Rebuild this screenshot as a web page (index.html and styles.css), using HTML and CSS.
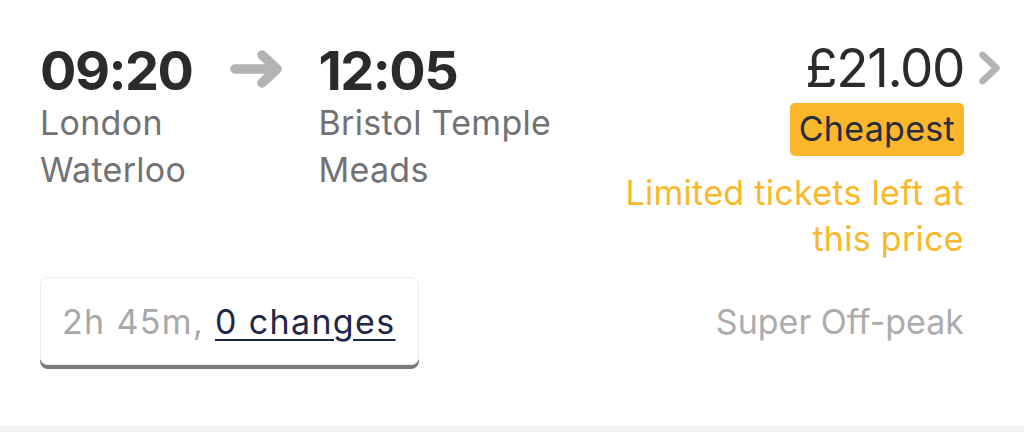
FILE: index.html
```html
<!DOCTYPE html>
<html>
<head>
<meta charset="utf-8">
<link rel="stylesheet" href="styles.css">
</head>
<body>
<div class="card">
  <div class="top">
    <div class="journey">
      <div class="stop">
        <div class="time">09:20</div>
        <div class="station">London<br>Waterloo</div>
      </div>
      <svg class="arrow" width="54" height="40" viewBox="0 0 54 40">
        <path d="M6 20 H48 M33 6 L48 20 L33 34" fill="none" stroke="#b3b3b5" stroke-width="9.5" stroke-linecap="round" stroke-linejoin="round"/>
      </svg>
      <div class="stop">
        <div class="time">12:05</div>
        <div class="station">Bristol Temple<br>Meads</div>
      </div>
    </div>
    <div class="fare">
      <div class="price-row">
        <span class="price">£21.00</span>
        <svg class="chev" width="24" height="34" viewBox="0 0 24 34">
          <path d="M4.5 4 L18.5 17 L4.5 30" fill="none" stroke="#b3b3b5" stroke-width="6.5" stroke-linecap="round" stroke-linejoin="round"/>
        </svg>
      </div>
      <div class="badge">Cheapest</div>
      <div class="limited">Limited tickets left at<br>this price</div>
    </div>
  </div>
  <div class="bottom">
    <div class="pill"><span class="pill-text"><span class="dur">2h 45m,</span> <a class="changes">0 changes</a></span></div>
    <div class="ticket">Super Off-peak</div>
  </div>
</div>
<div class="stripe"></div>
</body>
</html>
```

FILE: styles.css
```css
html, body {
  margin: 0;
  padding: 0;
  background: #ffffff;
}
body {
  width: 1024px;
  height: 432px;
  overflow: hidden;
  font-family: "Inter", "Noto Sans", sans-serif;
  display: flex;
  flex-direction: column;
}
.card {
  height: 426px;
  padding: 0 60px 0 40px;
  box-sizing: border-box;
}
.top {
  display: flex;
  justify-content: space-between;
}
.journey {
  display: flex;
  align-items: flex-start;
}
.stop {
  display: flex;
  flex-direction: column;
}
.time {
  font-size: 54px;
  font-weight: 700;
  color: #2b2b2d;
  line-height: 56px;
  margin-top: 43px;
  letter-spacing: -1.5px;
}
.station {
  font-size: 34px;
  color: #727274;
  line-height: 47px;
  letter-spacing: 0.3px;
}
.arrow {
  margin: 49px 35px 0 37px;
}
.fare {
  display: flex;
  flex-direction: column;
  align-items: flex-end;
}
.price-row {
  display: flex;
  align-items: center;
  margin-top: 35px;
  margin-right: -38px;
}
.price {
  font-size: 53px;
  color: #2b2b2d;
  line-height: 66px;
  letter-spacing: -1.4px;
}
.chev {
  margin-left: 14px;
}
.badge {
  background: #fbb72c;
  color: #262d40;
  font-size: 34px;
  line-height: 51px;
  padding: 0 9px 2px;
  border-radius: 5px;
  margin-top: 2px;
  letter-spacing: 0.3px;
}
.limited {
  text-align: right;
  color: #f8b92c;
  font-size: 34px;
  line-height: 46px;
  margin-top: 14px;
  letter-spacing: 0.3px;
}
.bottom {
  display: flex;
  justify-content: space-between;
  align-items: center;
  margin-top: 15px;
}
.pill {
  width: 379px;
  height: 88px;
  box-sizing: border-box;
  border-radius: 8px;
  border: 1px solid #ececec;
  box-shadow: 0 4px 0 #7a7a7a;
  display: flex;
  align-items: center;
  padding: 0 0 0 21px;
  font-size: 34px;
  letter-spacing: 1.35px;
}
.dur {
  color: #a8a8aa;
}
.changes {
  color: #1f2946;
  text-decoration: underline;
  text-decoration-thickness: 2px;
  text-underline-offset: 5px;
}
.ticket {
  color: #acacae;
  font-size: 34px;
}
.stripe {
  height: 6px;
  background: #f2f2f2;
}
```
